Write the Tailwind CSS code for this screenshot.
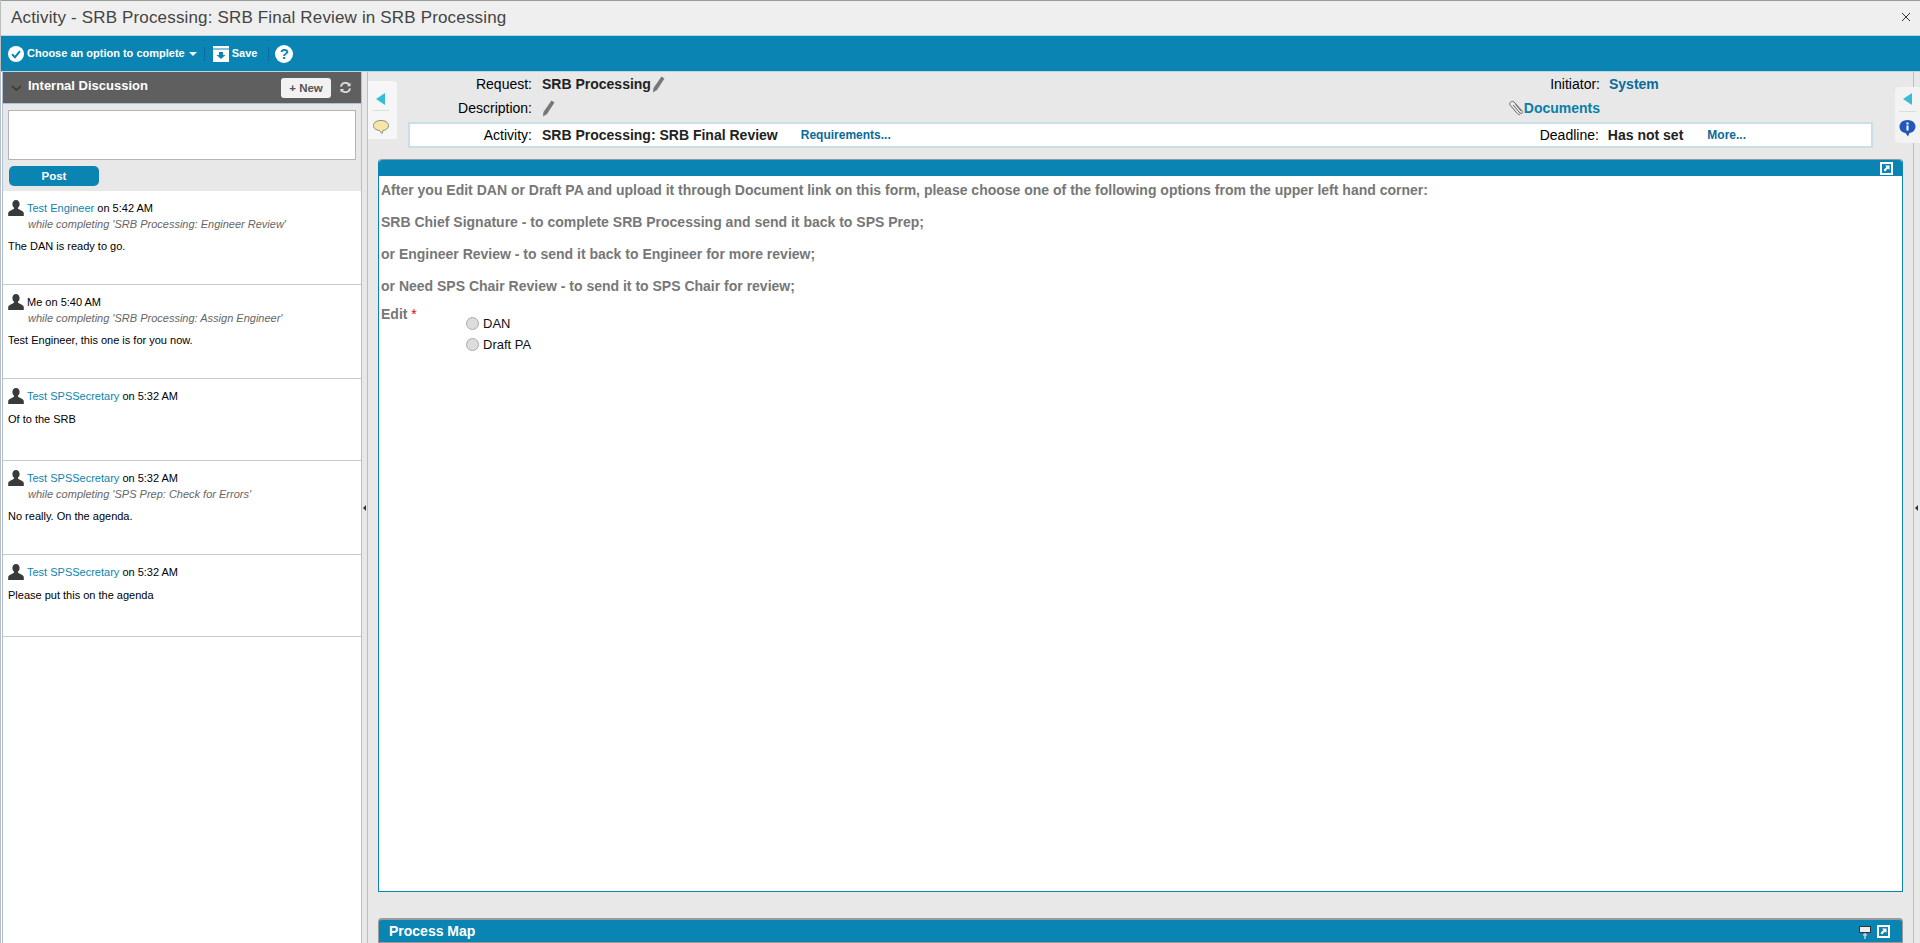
<!DOCTYPE html>
<html>
<head>
<meta charset="utf-8">
<script src="https://cdn.jsdelivr.net/npm/@tailwindcss/browser@4"></script>
<title>Activity</title>
</head>
<body class="m-0">
<div class="relative w-[1920px] h-[943px] overflow-hidden bg-white flex flex-col font-['Liberation_Sans',Arial,sans-serif] text-black border-l border-[#bdbdbd]">
  <!-- title bar -->
  <div class="h-[35px] shrink-0 bg-[#efefef] border-t border-[#9a9a9a] flex items-center justify-between pl-[10px] pr-[9px]">
    <span class="text-[17px] text-[#444] tracking-[0.16px] leading-none -mt-[2px]">Activity - SRB Processing: SRB Final Review in SRB Processing</span>
    <svg class="w-[10px] h-[10px] -mt-[2px]" viewBox="0 0 10 10"><path d="M1 1l8 8M9 1l-8 8" stroke="#333" stroke-width="1" fill="none"/></svg>
  </div>
  <!-- toolbar -->
  <div class="h-[37px] shrink-0 bg-[#0a85b3] border-y border-[#b5d6e6] flex items-center pl-[7px] text-white font-bold text-[11px]">
    <svg class="w-4 h-4" viewBox="0 0 16 16"><circle cx="8" cy="8" r="8" fill="#fff"/><path d="M4 8.200l3 3 5-6" stroke="#0a85b3" stroke-width="2" fill="none"/></svg>
    <span class="ml-[3px]">Choose an option to complete</span>
    <span class="ml-[4px] w-0 h-0 border-x-[4px] border-x-transparent border-t-[4px] border-t-white"></span>
    <span class="ml-[7px] w-px h-[14px] bg-[#0a6aa8]"></span>
    <svg class="ml-[8px] w-4 h-4" viewBox="0 0 16 16"><path d="M0 0h16v16H0z" fill="#fff"/><path d="M0 3h16" stroke="#0a85b3" stroke-width="1"/><path d="M6 6h4v3h2.500L8 13 3.500 9H6z" fill="#0a85b3"/></svg>
    <span class="ml-[3px]">Save</span>
    <span class="ml-[11px] w-px h-[14px] bg-[#0a6aa8]"></span>
    <span class="ml-[6px] w-[18px] h-[18px] rounded-full bg-white text-[#0a85b3] text-[15px] leading-[18px] text-center">?</span>
  </div>
  <!-- body -->
  <div class="flex-1 flex min-h-0">
    <!-- left panel -->
    <aside class="ml-px w-[360px] shrink-0 border-x border-[#a9c1e3] flex flex-col">
      <div class="h-[32px] shrink-0 bg-[#5f5f5f] flex items-center pl-[8px] pr-[10px] border-b border-[#a9c1e3]">
        <svg class="w-[11px] h-[6px] mt-px" viewBox="0 0 11 6"><path d="M1 1l4.500 4L10 1" stroke="#3f352c" stroke-width="1.500" fill="none"/></svg>
        <span class="ml-[6px] text-white font-bold text-[13px] -mt-[3px]">Internal Discussion</span>
        <span class="ml-auto w-[50px] h-[20px] bg-[#f2f2f2] rounded-[3px] text-[#555] font-bold text-[11.5px] leading-[20px] text-center">+ New</span>
        <svg class="ml-[9px] w-[11px] h-[11px]" viewBox="0 0 12 12"><path d="M1 5a5 5 0 0 1 9-2M11 7a5 5 0 0 1-9 2" stroke="#ddd" stroke-width="2" fill="none"/><path d="M11.500 .5v4h-4zM.5 11.500v-4h4z" fill="#ddd"/></svg>
      </div>
      <div class="h-[87px] shrink-0 bg-[#e8e8e8] px-[5px] pt-[6px]">
        <div class="h-[50px] bg-white border border-[#b5b5b5]"></div>
        <div class="mt-[6px] ml-px w-[90px] h-[20px] bg-[#0a85b3] rounded-[5px] text-white font-bold text-[11.5px] leading-[20px] text-center">Post</div>
      </div>
      <div class="text-[11px] leading-[13px]">
        <div class="h-[94px] border-b border-[#c5c9d3] pl-[5px] pt-[9px]">
          <div class="flex items-center h-[16px]">
            <svg class="w-[16px] h-[16px] shrink-0" viewBox="0 0 16 16"><path d="M8 0c2.300 0 3.600 1.800 3.600 4 0 1.600-.7 3-1.600 3.700v1.100l4.200 2.200c1 .5 1.600 1.400 1.600 2.500V16H.2v-2.500c0-1.100.6-2 1.600-2.500L6 8.800V7.700C5.100 7 4.400 5.600 4.400 4 4.400 1.800 5.700 0 8 0z" fill="#3a3a3a"/></svg>
            <span class="ml-[3px]"><span class="text-[#0a85b3]">Test Engineer</span> on 5:42 AM</span>
          </div>
          <div class="italic text-[#666] ml-[20px] mt-[2px]">while completing 'SRB Processing: Engineer Review'</div>
          <div class="mt-[9px]">The DAN is ready to go.</div>
        </div>
        <div class="h-[94px] border-b border-[#c5c9d3] pl-[5px] pt-[9px]">
          <div class="flex items-center h-[16px]">
            <svg class="w-[16px] h-[16px] shrink-0" viewBox="0 0 16 16"><path d="M8 0c2.300 0 3.600 1.800 3.600 4 0 1.600-.7 3-1.600 3.700v1.100l4.200 2.200c1 .5 1.600 1.400 1.600 2.500V16H.2v-2.500c0-1.100.6-2 1.600-2.500L6 8.800V7.700C5.100 7 4.400 5.600 4.400 4 4.400 1.800 5.700 0 8 0z" fill="#3a3a3a"/></svg>
            <span class="ml-[3px]">Me on 5:40 AM</span>
          </div>
          <div class="italic text-[#666] ml-[20px] mt-[2px]">while completing 'SRB Processing: Assign Engineer'</div>
          <div class="mt-[9px]">Test Engineer, this one is for you now.</div>
        </div>
        <div class="h-[82px] border-b border-[#c5c9d3] pl-[5px] pt-[9px]">
          <div class="flex items-center h-[16px]">
            <svg class="w-[16px] h-[16px] shrink-0" viewBox="0 0 16 16"><path d="M8 0c2.300 0 3.600 1.800 3.600 4 0 1.600-.7 3-1.600 3.700v1.100l4.200 2.200c1 .5 1.600 1.400 1.600 2.500V16H.2v-2.500c0-1.100.6-2 1.600-2.500L6 8.800V7.700C5.100 7 4.400 5.600 4.400 4 4.400 1.800 5.700 0 8 0z" fill="#3a3a3a"/></svg>
            <span class="ml-[3px]"><span class="text-[#0a85b3]">Test SPSSecretary</span> on 5:32 AM</span>
          </div>
          <div class="mt-[9px]">Of to the SRB</div>
        </div>
        <div class="h-[94px] border-b border-[#c5c9d3] pl-[5px] pt-[9px]">
          <div class="flex items-center h-[16px]">
            <svg class="w-[16px] h-[16px] shrink-0" viewBox="0 0 16 16"><path d="M8 0c2.300 0 3.600 1.800 3.600 4 0 1.600-.7 3-1.600 3.700v1.100l4.200 2.200c1 .5 1.600 1.400 1.600 2.500V16H.2v-2.500c0-1.100.6-2 1.600-2.500L6 8.800V7.700C5.100 7 4.400 5.600 4.400 4 4.400 1.800 5.700 0 8 0z" fill="#3a3a3a"/></svg>
            <span class="ml-[3px]"><span class="text-[#0a85b3]">Test SPSSecretary</span> on 5:32 AM</span>
          </div>
          <div class="italic text-[#666] ml-[20px] mt-[2px]">while completing 'SPS Prep: Check for Errors'</div>
          <div class="mt-[9px]">No really. On the agenda.</div>
        </div>
        <div class="h-[82px] border-b border-[#c5c9d3] pl-[5px] pt-[9px]">
          <div class="flex items-center h-[16px]">
            <svg class="w-[16px] h-[16px] shrink-0" viewBox="0 0 16 16"><path d="M8 0c2.300 0 3.600 1.800 3.600 4 0 1.600-.7 3-1.600 3.700v1.100l4.200 2.200c1 .5 1.600 1.400 1.600 2.500V16H.2v-2.500c0-1.100.6-2 1.600-2.500L6 8.800V7.700C5.100 7 4.400 5.600 4.400 4 4.400 1.800 5.700 0 8 0z" fill="#3a3a3a"/></svg>
            <span class="ml-[3px]"><span class="text-[#0a85b3]">Test SPSSecretary</span> on 5:32 AM</span>
          </div>
          <div class="mt-[9px]">Please put this on the agenda</div>
        </div>
      </div>
    </aside>
    <!-- splitter -->
    <div class="relative w-[5px] shrink-0 bg-[#e8e8e8]">
      <span class="absolute left-[1px] top-[433px] w-0 h-0 border-y-[3px] border-y-transparent border-r-[3px] border-r-[#333]"></span>
    </div>
    <!-- main -->
    <main class="relative flex-1 min-w-0 overflow-hidden border-l border-[#a9c1e3] bg-[#e8e8e8] flex flex-col pr-[17px]">
      <div class="h-[24px] shrink-0 flex items-center text-[14px]">
        <span class="w-[164px] text-right">Request:</span>
        <span class="ml-[10px] font-bold text-[#222]">SRB Processing</span>
        <svg class="ml-px w-[13px] h-[17px]" viewBox="0 0 13 17"><path d="M9.500 .5l3 2L5 14l-4 2.500.5-4.500z" fill="#777"/></svg>
        <span class="flex-1"></span>
        <span class="text-right">Initiator:</span>
        <span class="ml-[9px] w-[294px] font-bold text-[#0a6a9a]">System</span>
      </div>
      <div class="h-[24px] shrink-0 flex items-center text-[14px]">
        <span class="w-[164px] text-right">Description:</span>
        <svg class="ml-[10px] w-[13px] h-[17px]" viewBox="0 0 13 17"><path d="M9.500 .5l3 2L5 14l-4 2.500.5-4.500z" fill="#777"/></svg>
        <span class="flex-1"></span>
        <svg class="w-[16px] h-[16px]" viewBox="0 0 16 16"><path d="M5 5l7 8c1.500 1.500 3.500-.5 2-2.200L6 2C4 0 .5 2.800 2.200 5.200l6.800 8c1 1 2 1.500 3 1.500M7.500 4.500l5.500 6.500" stroke="#666" stroke-width="1" fill="none"/></svg>
        <span class="font-bold text-[#0a7fa8]">Documents</span>
        <span class="w-[303px]"></span>
      </div>
      <div class="h-[26px] shrink-0 mt-[2px] ml-[40px] mr-[30px] bg-white border-2 border-[#c8dfe6] flex items-center text-[14px]">
        <span class="w-[122px] text-right">Activity:</span>
        <span class="ml-[10px] font-bold text-[#222]">SRB Processing: SRB Final Review</span>
        <span class="ml-[23px] font-bold text-[12px] text-[#0a6a9a]">Requirements...</span>
        <span class="flex-1"></span>
        <span>Deadline:</span>
        <span class="ml-[9px] font-bold text-[#222]">Has not set</span>
        <span class="ml-[24px] mr-[125px] font-bold text-[12px] text-[#0a6a9a]">More...</span>
      </div>
      <section class="mt-[11px] ml-[10px] h-[733px] shrink-0 bg-white border border-[#0a85b3] border-t-0 rounded-t-[4px] flex flex-col">
        <div class="h-[17px] shrink-0 bg-[#0a85b3] border-t border-[#8a9aa3] rounded-t-[4px] flex items-center justify-end pr-[9px]">
          <svg class="w-[13px] h-[13px]" viewBox="0 0 13 13"><path d="M0 0h13v13H0z" fill="#fff"/><path d="M2 2h9v9H2z" fill="#0a85b3"/><path d="M5 3.500h4.500V8L8 6.500 5 9.500 3.500 8l3-3z" fill="#fff"/></svg>
        </div>
        <div class="pl-[2px] pt-[6px] text-[#777] font-bold text-[14px]">
          <p class="h-[32px] leading-[16px] whitespace-nowrap">After you Edit DAN or Draft PA and upload it through Document link on this form, please choose one of the following options from the upper left hand corner:</p>
          <p class="h-[32px] leading-[16px] whitespace-nowrap">SRB Chief Signature - to complete SRB Processing and send it back to SPS Prep;</p>
          <p class="h-[32px] leading-[16px] whitespace-nowrap">or Engineer Review - to send it back to Engineer for more review;</p>
          <p class="h-[28px] leading-[16px] whitespace-nowrap">or Need SPS Chair Review - to send it to SPS Chair for review;</p>
          <div class="flex">
            <span class="w-[85px] leading-[16px]">Edit <span class="text-red-600 font-normal">*</span></span>
            <div class="pt-[7px] font-normal text-[13px] text-[#111]">
              <label class="flex items-center h-[21px]"><input type="radio" class="appearance-none w-[13px] h-[13px] rounded-full border border-[#aaa] bg-[#ddd]"><span class="ml-[4px]">DAN</span></label>
              <label class="flex items-center h-[21px]"><input type="radio" class="appearance-none w-[13px] h-[13px] rounded-full border border-[#aaa] bg-[#ddd]"><span class="ml-[4px]">Draft PA</span></label>
            </div>
          </div>
        </div>
      </section>
      <section class="mt-[26px] ml-[10px] h-[25px] shrink-0 bg-[#0a85b3] border border-[#9a9a9a] border-t-2 rounded-t-[4px] flex items-center pl-[10px] pr-[12px] pt-px text-white font-bold text-[14px]">
        <span>Process Map</span>
        <svg class="ml-auto mt-[2px] w-[12px] h-[13px]" viewBox="0 0 12 13"><path d="M0 0h12v7H0z" fill="#333"/><path d="M1 1h10v5H1z" fill="#eee"/><path d="M6 7v6M4 9h4" stroke="#ccc" stroke-width="1.500"/></svg>
        <svg class="ml-[6px] w-[13px] h-[13px]" viewBox="0 0 13 13"><path d="M0 0h13v13H0z" fill="#fff"/><path d="M2 2h9v9H2z" fill="#0a85b3"/><path d="M5 3.500h4.500V8L8 6.500 5 9.500 3.500 8l3-3z" fill="#fff"/></svg>
      </section>
      <!-- left flyout tab -->
      <div class="absolute left-0 top-[9px] w-[29px] h-[58px] bg-[#f6f6f6] rounded-tr-[4px] flex flex-col items-center pt-[12px] pl-[4px] pr-[8px]">
        <span class="w-0 h-0 border-y-[6px] border-y-transparent border-r-[9px] border-r-[#35bcd6]"></span>
        <span class="mt-[5px] w-[17px] h-px shrink-0 bg-[#ddd]"></span>
        <svg class="mt-[9px] w-[16px] h-[14px] shrink-0" viewBox="0 0 16 14"><path d="M8 .5c4 0 7.500 1.800 7.500 5S12 10.500 10 10.500L9 13.500 6.500 10.500C3 10 .5 8.500.5 5.500.5 2.300 4 .5 8 .5z" fill="#f6e7a8" stroke="#8a8a7a" stroke-width="1"/></svg>
      </div>
      <!-- right splitter line -->
      <div class="absolute right-[6px] top-0 bottom-0 w-px bg-[#a9c1e3]"></div>
      <span class="absolute right-[2px] top-[433px] w-0 h-0 border-y-[3px] border-y-transparent border-r-[3px] border-r-[#333]"></span>
      <!-- right flyout tab -->
      <div class="absolute right-0 top-[15px] w-[25px] h-[56px] bg-[#f3f3f3] rounded-l-[4px] flex flex-col items-center pt-[6px]">
        <span class="w-0 h-0 border-y-[6px] border-y-transparent border-r-[9px] border-r-[#35bcd6]"></span>
        <span class="mt-[6px] w-[17px] h-px shrink-0 bg-[#ddd]"></span>
        <svg class="mt-[8px] w-[17px] h-[17px] shrink-0" viewBox="0 0 17 17"><path d="M8.500 0c4.500 0 8 2.800 8 6.500S13 13 10.500 13L9 16.500 6.500 13C3 12.500.5 10 .5 6.500.5 2.800 4 0 8.500 0z" fill="#2457b8"/><path d="M7.500 2.500h2v2h-2zM7.500 5.500h2v5h-2z" fill="#fff"/></svg>
      </div>
    </main>
  </div>
</div>
</body>
</html>
